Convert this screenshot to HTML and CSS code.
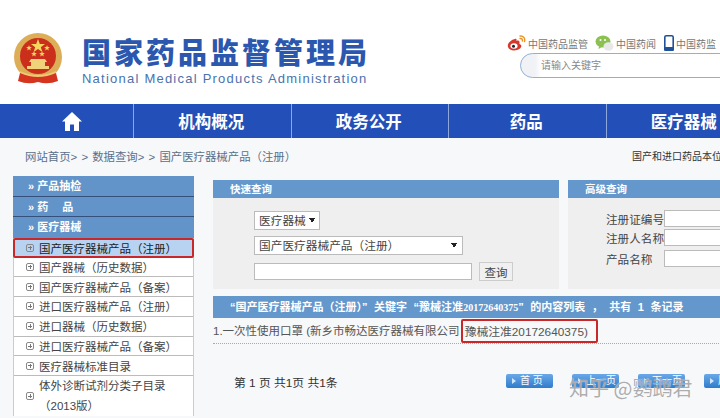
FILE: index.html
```html
<!DOCTYPE html>
<html lang="zh-CN">

<head>
    <meta charset="UTF-8">
    <title>国家药品监督管理局</title>
    <link rel="stylesheet" href="styles.css">
</head>

<body>
    <!-- 头部 -->
    <header class="top">
        <svg class="emblem" width="48" height="52" viewBox="0 0 48 52">
            <defs>
                <path id="star" d="M0 -2.800 L.8 -.9 L2.800 -.9 L1.200 .4 L1.800 2.400 L0 1.200 L-1.800 2.400 L-1.200 .4 L-2.800 -.9 L-.8 -.9 Z" fill="#f5d65e" />
            </defs>
            <circle cx="24" cy="24" r="24" fill="#dcae58" />
            <circle cx="24" cy="23" r="18" fill="#cb2f1b" />
            <path d="M24 6 L25.800 11 L31 11 L26.800 14.200 L28.400 19 L24 16 L19.600 19 L21.200 14.200 L17 11 L22.200 11 Z" fill="#f5d65e" />
            <use href="#star" x="15" y="15" />
            <use href="#star" x="33" y="15" />
            <use href="#star" x="20" y="21" />
            <use href="#star" x="28" y="21" />
            <path d="M17 26 H31 L33 29 H31 V33 H35 V36 H13 V33 H17 V29 H15 Z" fill="#f0d27a" />
            <path d="M6 38 Q24 46 42 38 V41 Q24 49 6 41 Z" fill="#efc873" />
            <path d="M6 40 L4 48 Q14 52 24 49 Q34 52 44 48 L42 40 Q24 48 6 40 Z" fill="#d5341f" />
        </svg>
        <div class="brand">
            <h1>国家药品监督管理局</h1>
            <p>National Medical Products Administration</p>
        </div>
        <div class="tools">
            <div class="links">
                <svg width="19" height="16" viewBox="0 0 19 16">
                    <path d="M8 4 C3 5 0 9 1 12 C2 15 6 16 10 15 C14 14 15 11 14 10 C13 9 12 9 12.500 8 C13 6 11 5 9 6 C10 4 9.500 3.600 8 4 Z" fill="#d8382c" />
                    <ellipse cx="7" cy="11" rx="3.600" ry="2.800" fill="#fff" />
                    <circle cx="6.500" cy="11.200" r="1.500" fill="#222" />
                    <path d="M13 1 C16 0.500 18.500 3 17.500 6.500 M13 3.500 C14.800 3.200 15.800 4.500 15.300 6" fill="none" stroke="#ee9320" stroke-width="1.400" stroke-linecap="round" />
                </svg>
                <span class="link-text link-weibo">中国药品监管</span>
                <svg width="19" height="16" viewBox="0 0 19 16">
                    <ellipse cx="8" cy="6.500" rx="7.500" ry="6" fill="#8cc152" />
                    <path d="M4 11 L3.500 14 L7 12 Z" fill="#8cc152" />
                    <ellipse cx="13.500" cy="11.500" rx="5" ry="4.200" fill="#e8e8e8" />
                    <circle cx="5.500" cy="5" r="1" fill="#fff" />
                    <circle cx="10" cy="5" r="1" fill="#fff" />
                </svg>
                <span class="link-text link-news">中国药闻</span>
                <svg width="10" height="16" viewBox="0 0 10 16">
                    <rect x="0.800" y="0.800" width="8.400" height="14.400" rx="1.500" fill="#fff" stroke="#1f5296" stroke-width="1.600" />
                    <rect x="0" y="12" width="10" height="4" rx="1.500" fill="#1f5296" />
                </svg>
                <span class="link-text">中国药监</span>
            </div>
            <div class="search">请输入关键字</div>
        </div>
    </header>

    <!-- 导航 -->
    <nav class="nav">
        <a class="nav-home">
            <svg width="20" height="19" viewBox="0 0 20 19">
                <path d="M10 0 L20 9.500 L17 9.500 L17 19 L12 19 L12 12.500 L8 12.500 L8 19 L3 19 L3 9.500 L0 9.500 Z" fill="#fff" />
            </svg>
        </a>
        <a>机构概况</a>
        <a>政务公开</a>
        <a>药品</a>
        <a>医疗器械</a>
    </nav>

    <!-- 面包屑 -->
    <div class="crumb">
        <span class="crumb-path">网站首页&gt; &gt; 数据查询&gt; &gt; 国产医疗器械产品（注册）</span>
        <span class="crumb-note">国产和进口药品本位码查询</span>
    </div>

    <div class="content">
        <!-- 左侧菜单 -->
        <aside class="side">
            <div class="side-head">» 产品抽检</div>
            <div class="side-head">» 药　 品</div>
            <div class="side-head">» 医疗器械</div>
            <ul class="side-list">
                <li class="active"><i></i>国产医疗器械产品（注册）</li>
                <li><i></i>国产器械（历史数据）</li>
                <li><i></i>国产医疗器械产品（备案）</li>
                <li><i></i>进口医疗器械产品（注册）</li>
                <li><i></i>进口器械（历史数据）</li>
                <li><i></i>进口医疗器械产品（备案）</li>
                <li><i></i>医疗器械标准目录</li>
                <li class="tall"><i></i><span>体外诊断试剂分类子目录<br>（2013版）</span></li>
            </ul>
        </aside>

        <main class="main">
            <div class="panels">
                <section class="panel panel-quick">
                    <h3>快速查询</h3>
                    <div class="quick-body">
                        <select class="sel-type">
                            <option>医疗器械</option>
                        </select>
                        <select class="sel-db">
                            <option>国产医疗器械产品（注册）</option>
                        </select>
                        <div class="quick-row">
                            <input class="quick-input" type="text">
                            <button class="quick-btn">查询</button>
                        </div>
                    </div>
                </section>
                <section class="panel panel-adv">
                    <h3>高级查询</h3>
                    <div class="adv-body">
                        <label>注册证编号<input type="text"></label>
                        <label>注册人名称<input type="text"></label>
                        <label class="adv-row-last">产品名称<input class="adv-last" type="text"></label>
                    </div>
                </section>
            </div>

            <div class="result-head">“国产医疗器械产品（注册）” 关键字 “豫械注准<span class="result-num">20172640375</span>” 的内容列表 ， 共有 1 条记录</div>
            <div class="result-row">1.一次性使用口罩 (新乡市畅达医疗器械有限公司<span class="mark">豫械注准20172640375)</span></div>

            <div class="pager">
                <span class="pager-text">第 1 页 共1页 共1条</span>
                <a class="pager-btn">首 页</a>
                <a class="pager-btn">上一页</a>
                <a class="pager-btn">下一页</a>
                <a class="pager-btn">尾 页</a>
            </div>
        </main>
    </div>

    <!-- 水印 -->
    <div class="watermark">知乎 @鹦鹉君</div>
</body>

</html>
```

FILE: styles.css
```css
* {
    margin: 0;
    padding: 0;
    box-sizing: border-box;
}

html,
body {
    width: 720px;
    height: 418px;
    overflow: hidden;
}

body {
    position: relative;
    background: #f6f8fa;
    color: #333;
    font-family: "Liberation Sans", "Noto Sans CJK SC", sans-serif;
    font-size: 12px;
}

/* 头部 */
.top {
    display: flex;
    height: 104px;
    padding: 33px 0 0 14px;
    background: #fff;
}

.emblem {
    flex: none;
}

.brand {
    flex: none;
    width: 445px;
    padding: 2px 0 0 20px;
}

.brand h1 {
    color: #2b57ae;
    font-family: "Noto Sans CJK SC", sans-serif;
    font-size: 29px;
    line-height: 33px;
    font-weight: 900;
    letter-spacing: 3px;
    white-space: nowrap;
}

.brand p {
    margin-top: 2px;
    color: #4a72ad;
    font-size: 13px;
    line-height: 17px;
    letter-spacing: 1.230px;
    white-space: nowrap;
}

.tools {
    flex: none;
    width: 300px;
    margin-top: 1px;
}

.links {
    display: flex;
    align-items: center;
    height: 18px;
}

.link-text {
    margin-left: 2px;
    color: #777;
    font-size: 10px;
    white-space: nowrap;
}

.link-weibo {
    margin-right: 7px;
}

.link-news {
    margin-right: 8px;
}

.search {
    width: 260px;
    height: 25px;
    margin: 1px 0 0 13px;
    padding-left: 20px;
    border: 1px solid #8fb1d2;
    border-radius: 13px;
    background: linear-gradient(to right, #f1f2f6 14px, #fff 20px);
    color: #888;
    font-size: 10px;
    line-height: 23px;
}

/* 导航 */
.nav {
    display: flex;
    height: 34px;
    background: #2350b8;
}

.nav a {
    flex: none;
    width: 157.500px;
    padding-right: 2px;
    border-left: 1px solid #8fa8dc;
    color: #fff;
    font-family: "Noto Sans CJK SC", sans-serif;
    font-size: 16.500px;
    font-weight: 700;
    line-height: 34px;
    text-align: center;
}

.nav .nav-home {
    display: flex;
    align-items: center;
    justify-content: center;
    width: 133px;
    padding-left: 11px;
    padding-right: 1px;
    border-left: 0;
}

/* 面包屑 */
.crumb {
    display: flex;
    justify-content: space-between;
    height: 38px;
    padding: 11px 0 0 25px;
    color: #5b6f8a;
    font-size: 11.400px;
    line-height: 16px;
    white-space: nowrap;
}

.crumb-path {
    word-spacing: 1px;
}

.crumb-note {
    flex: none;
    width: 88px;
    overflow: hidden;
    color: #333;
    font-size: 10px;
}

/* 内容 */
.content {
    display: flex;
    padding-left: 13px;
}

.side {
    flex: none;
    width: 181px;
}

.side-head {
    height: 20.500px;
    padding-left: 15px;
    border-bottom: 1px solid #35507a;
    background: #6394c9;
    color: #fff;
    font-size: 11px;
    font-weight: 700;
    line-height: 20px;
}

.side-head:nth-child(3) {
    border-bottom: 0;
}

.side-list {
    list-style: none;
    background: #fff;
    border-left: 1px solid #ccc;
    border-right: 1px solid #ccc;
}

.side-list li {
    display: flex;
    align-items: center;
    height: 19.800px;
    padding-left: 12px;
    border-bottom: 1px solid #bbb;
    color: #444;
    font-size: 11.500px;
    white-space: nowrap;
}

.side-list i {
    flex: none;
    width: 8px;
    height: 8px;
    margin-right: 5px;
    border: 1px solid #888;
    border-radius: 2px;
    background:
        linear-gradient(#777, #777) center / 4px 1px no-repeat,
        linear-gradient(#777, #777) center / 1px 4px no-repeat;
}

.side-list .active {
    height: 20px;
    margin: 0 -1px;
    padding-left: 11px;
    border: 2px solid #c8282a;
    border-radius: 2px;
    background: #b7d3f1;
    color: #222;
}

.side-list .tall {
    height: 40px;
    line-height: 20px;
    border-bottom: 0;
}

.main {
    flex: none;
    width: 520px;
    margin-left: 19px;
}

.panels {
    display: flex;
    gap: 9px;
    margin-top: 4px;
}

.panel {
    flex: none;
    height: 109px;
    background: #efefef;
}

.panel h3 {
    height: 18px;
    padding-left: 17px;
    background: #6497cc;
    color: #fff;
    font-size: 10.500px;
    line-height: 18px;
}

.panel-quick {
    width: 346px;
}

.panel-adv {
    width: 165px;
}

.quick-body {
    display: flex;
    flex-direction: column;
    align-items: flex-start;
    padding: 13px 0 0 41px;
}

.quick-body select,
.quick-input,
.adv-body input {
    border: 1px solid #bbb;
    background-color: #fff;
    color: #444;
    font-family: inherit;
    font-size: 11.700px;
}

/* 下拉框的小黑三角 */
.quick-body select {
    padding-left: 4px;
    appearance: none;
    background-image:
        linear-gradient(to top right, transparent 50%, #222 50%),
        linear-gradient(to top left, transparent 50%, #222 50%);
    background-size: 3px 5px;
    background-repeat: no-repeat;
}

.sel-type {
    width: 66px;
    height: 19px;
    background-position: right 7px center, right 4px center;
}

.sel-db {
    width: 209px;
    height: 19px;
    margin-top: 6px;
    background-position: right 8px center, right 5px center;
}

.quick-row {
    display: flex;
    align-items: center;
    margin-top: 7px;
}

.quick-input {
    width: 218px;
    height: 17px;
}

.quick-btn {
    width: 34px;
    height: 19px;
    margin-left: 7px;
    border: 1px solid #ccc;
    background: #f0f0f0;
    color: #444;
    font-family: inherit;
    font-size: 11.500px;
}

.adv-body {
    display: flex;
    flex-direction: column;
    gap: 2px;
    padding: 12px 0 0 38px;
    color: #444;
    font-size: 11.600px;
    white-space: nowrap;
}

.adv-body label {
    display: flex;
    align-items: center;
    height: 17px;
}

.adv-body .adv-row-last {
    margin-top: 2px;
}

.adv-body input {
    flex: none;
    width: 80px;
    height: 17px;
}

.adv-body .adv-last {
    margin-left: 12px;
}

.result-head {
    height: 22px;
    margin-top: 7px;
    padding-left: 17px;
    background: #6497cc;
    color: #fff;
    font-size: 11px;
    font-weight: 700;
    line-height: 22px;
    word-spacing: 3.500px;
    white-space: nowrap;
    overflow: hidden;
}

.result-num {
    font-family: "Liberation Serif", serif;
    font-size: 10px;
}

.result-row {
    height: 26px;
    padding-top: 5px;
    border-bottom: 1px dotted #aaa;
    color: #555;
    font-size: 11.500px;
    line-height: 17px;
    white-space: nowrap;
}

.mark {
    display: inline-block;
    height: 24px;
    margin-top: -4px;
    margin-left: 1px;
    padding: 3px 8px 0 2px;
    border: 2px solid #c8282a;
    border-radius: 2px;
    font-size: 11.800px;
    line-height: 17px;
    vertical-align: top;
}

.pager {
    display: flex;
    align-items: center;
    margin-top: 30px;
    height: 14px;
    padding-left: 21px;
    white-space: nowrap;
}

.pager-text {
    flex: none;
    width: 272px;
    color: #333;
    font-size: 11.800px;
}

.pager-btn {
    flex: none;
    width: 47px;
    height: 14px;
    margin-right: 19px;
    padding-left: 14px;
    border-radius: 2px;
    background: linear-gradient(#6aa8e8, #2f7ccb);
    color: #fff;
    font-size: 10px;
    line-height: 14px;
    position: relative;
}

/* 按钮里的小三角 */
.pager-btn::before {
    content: "";
    position: absolute;
    left: 6px;
    top: 4px;
    border-left: 4px solid #cfe6fb;
    border-top: 3px solid transparent;
    border-bottom: 3px solid transparent;
}

/* 水印 */
.watermark {
    position: absolute;
    left: 569px;
    top: 375px;
    color: rgba(125, 125, 125, 0.65);
    font-family: "Noto Sans CJK SC", sans-serif;
    font-size: 20px;
    line-height: 26px;
    text-shadow: 0 0 1px #fff;
    white-space: nowrap;
}
```
